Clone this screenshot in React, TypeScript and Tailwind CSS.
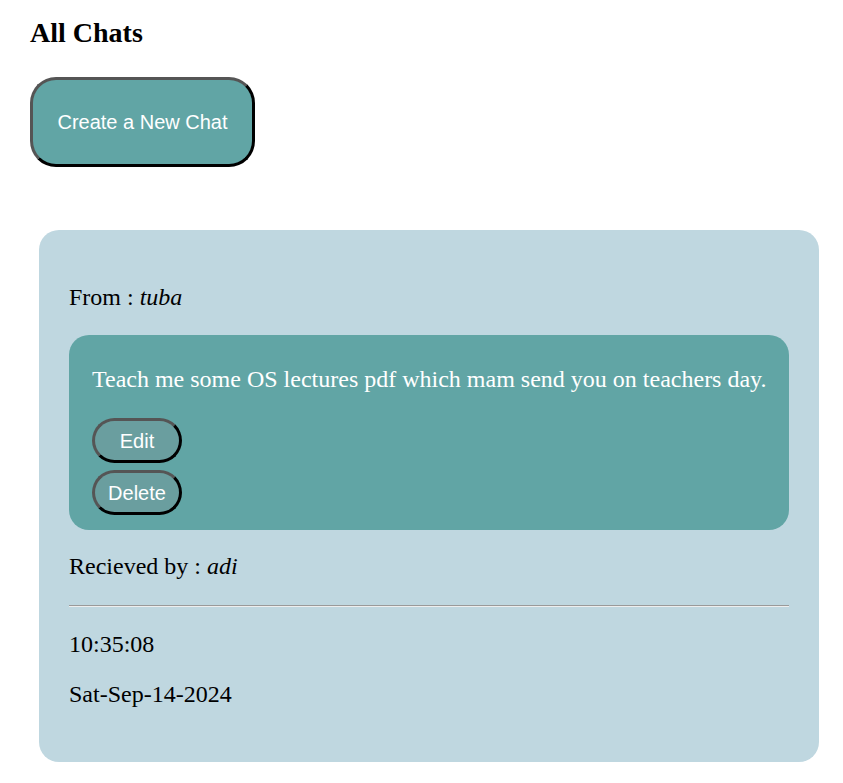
import React from "react";

export default function App() {
  const serif = { fontFamily: '"Liberation Serif", "Times New Roman", serif' };
  const btnBorder =
    "border-[3px] border-t-[#555555] border-l-[#555555] border-r-black border-b-black";
  return (
    <div className="bg-white min-h-[783px] w-[843px] text-black" style={serif}>
      <div className="pl-[30px]">
        <h2 className="pt-[17px] text-[28px] leading-[31px] font-bold">All Chats</h2>
        <button
          className={`mt-[29px] w-[225px] h-[90px] rounded-[26px] bg-[#61a5a5] text-white text-[20px] font-['Liberation_Sans',Arial,sans-serif] ${btnBorder}`}
        >
          Create a New Chat
        </button>
      </div>
      <div className="ml-[39px] mt-[63px] w-[780px] rounded-[20px] bg-[#bfd7e0] px-[30px] pt-[54px] pb-[55px] text-[24px] leading-[26px]">
        <p>
          From : <i>tuba</i>
        </p>
        <div className="mt-[25px] rounded-[20px] bg-[#61a5a5] px-[23px] pt-[31px] pb-[15px] text-white">
          <p className="whitespace-nowrap">Teach me some OS lectures pdf which mam send you on teachers day.</p>
          <div className="mt-[26px] flex flex-col gap-[7px] items-start">
            <button
              className={`w-[90px] h-[45px] rounded-full bg-[#6a9e9f] text-white text-[20px] font-['Liberation_Sans',Arial,sans-serif] ${btnBorder}`}
            >
              Edit
            </button>
            <button
              className={`w-[90px] h-[45px] rounded-full bg-[#6a9e9f] text-white text-[20px] font-['Liberation_Sans',Arial,sans-serif] ${btnBorder}`}
            >
              Delete
            </button>
          </div>
        </div>
        <p className="mt-[23px]">
          Recieved by : <i>adi</i>
        </p>
        <hr className="mt-[26px] border-t border-t-[#9a9a9a] border-b border-b-[#eeeeee] h-0" />
        <p className="mt-[24px]">10:35:08</p>
        <p className="mt-[24px]">Sat-Sep-14-2024</p>
      </div>
    </div>
  );
}
